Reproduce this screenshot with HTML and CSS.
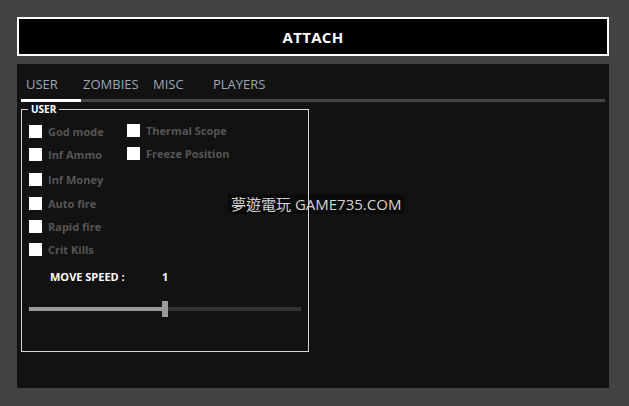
FILE: index.html
```html
<!DOCTYPE html>
<html>
<head>
<meta charset="utf-8">
<link rel="stylesheet" href="styles.css">
</head>
<body>
<div class="app">
  <div class="attach">ATTACH</div>
  <div class="panel">
    <div class="tabs">
      <div class="tab tab-user active">USER</div>
      <div class="tab tab-zombies">ZOMBIES</div>
      <div class="tab tab-misc">MISC</div>
      <div class="tab tab-players">PLAYERS</div>
    </div>
    <div class="strip"><div class="strip-sel"></div></div>
    <fieldset class="group">
      <legend class="legend">USER</legend>
      <div class="checks">
        <div class="col col1">
          <div class="item"><span class="box"></span><span class="lbl">God mode</span></div>
          <div class="item"><span class="box"></span><span class="lbl">Inf Ammo</span></div>
          <div class="item row-b"><span class="box"></span><span class="lbl">Inf Money</span></div>
          <div class="item row-c"><span class="box"></span><span class="lbl">Auto fire</span></div>
          <div class="item"><span class="box"></span><span class="lbl">Rapid fire</span></div>
          <div class="item"><span class="box"></span><span class="lbl">Crit Kills</span></div>
        </div>
        <div class="col col2">
          <div class="item"><span class="box"></span><span class="lbl">Thermal Scope</span></div>
          <div class="item"><span class="box"></span><span class="lbl">Freeze Position</span></div>
        </div>
      </div>
      <div class="speed"><span class="speed-lbl">MOVE SPEED :</span><span class="speed-val">1</span></div>
      <div class="slider">
        <div class="fill"></div>
        <div class="thumb"></div>
        <div class="rest"></div>
      </div>
    </fieldset>
  </div>
</div>
<div class="watermark">夢遊電玩 GAME735.COM</div>
</body>
</html>
```
FILE: styles.css
```css
html, body {
  margin: 0;
  padding: 0;
}
body {
  background: #424242;
  width: 629px;
  height: 406px;
  overflow: hidden;
  font-family: "Open Sans", "Noto Sans", sans-serif;
}
.app {
  padding: 17px 0 0 17px;
}
.attach {
  width: 592px;
  height: 39px;
  box-sizing: border-box;
  border: 2px solid #fff;
  background: #000;
  color: #fff;
  font-weight: 700;
  font-size: 15px;
  letter-spacing: 0.3px;
  display: flex;
  align-items: center;
  justify-content: center;
}
.panel {
  margin-top: 8px;
  width: 592px;
  height: 324px;
  box-sizing: border-box;
  background: #121212;
  padding: 0 4px;
}
.tabs {
  display: flex;
  padding-top: 11px;
  padding-bottom: 6px;
}
.tab {
  font-size: 13px;
  line-height: 18px;
  color: #9aa7b4;
  box-sizing: border-box;
}
.tab-user { width: 60px; padding-left: 5px; }
.tab-zombies { width: 70px; padding-left: 2px; }
.tab-misc { width: 60px; padding-left: 2px; }
.tab-players { padding-left: 2px; }
.strip {
  height: 3px;
  background: #444;
}
.strip-sel {
  width: 60px;
  height: 3px;
  background: #fff;
}
.group {
  position: relative;
  z-index: 1;
  margin: 1px 0 0 0;
  padding: 0 0 0 7px;
  width: 288px;
  height: 249px;
  box-sizing: border-box;
  border: 1px solid #d6d6d6;
  min-width: 0;
}
.legend {
  margin-left: -1px;
  padding: 0 3px;
  font-size: 10px;
  line-height: 12px;
  font-weight: 700;
  color: #fff;
}
.checks {
  display: flex;
  padding-top: 5px;
}
.col1 { width: 98px; }
.col2 { margin-top: -1px; }
.item {
  height: 23px;
  display: flex;
  align-items: center;
}
.row-b { margin-top: 2px; }
.row-c { margin-top: 1px; }
.box {
  width: 13px;
  height: 13px;
  background: #fff;
  flex: none;
}
.lbl {
  margin-left: 6px;
  font-size: 11px;
  font-weight: 700;
  color: #555;
  white-space: nowrap;
}
.speed {
  display: flex;
  margin-top: 8px;
  padding-left: 21px;
  font-size: 11px;
  line-height: 15px;
  font-weight: 700;
  color: #fff;
}
.speed-lbl { width: 112px; }
.slider {
  margin-top: 17px;
  width: 272px;
  height: 16px;
  display: flex;
  align-items: center;
}
.fill {
  width: 133px;
  height: 4px;
  background: #9a9a9a;
}
.thumb {
  width: 6px;
  height: 16px;
  background: #9a9a9a;
}
.rest {
  flex: 1;
  height: 4px;
  background: #333;
}
.watermark {
  position: absolute;
  left: 228px;
  top: 194px;
  z-index: 0;
  padding: 0 3px;
  background: #0b0b0b;
  color: #d4d4d4;
  font-family: "Open Sans", "Noto Sans CJK TC", sans-serif;
  font-size: 15px;
  line-height: 20px;
  white-space: nowrap;
}
```
